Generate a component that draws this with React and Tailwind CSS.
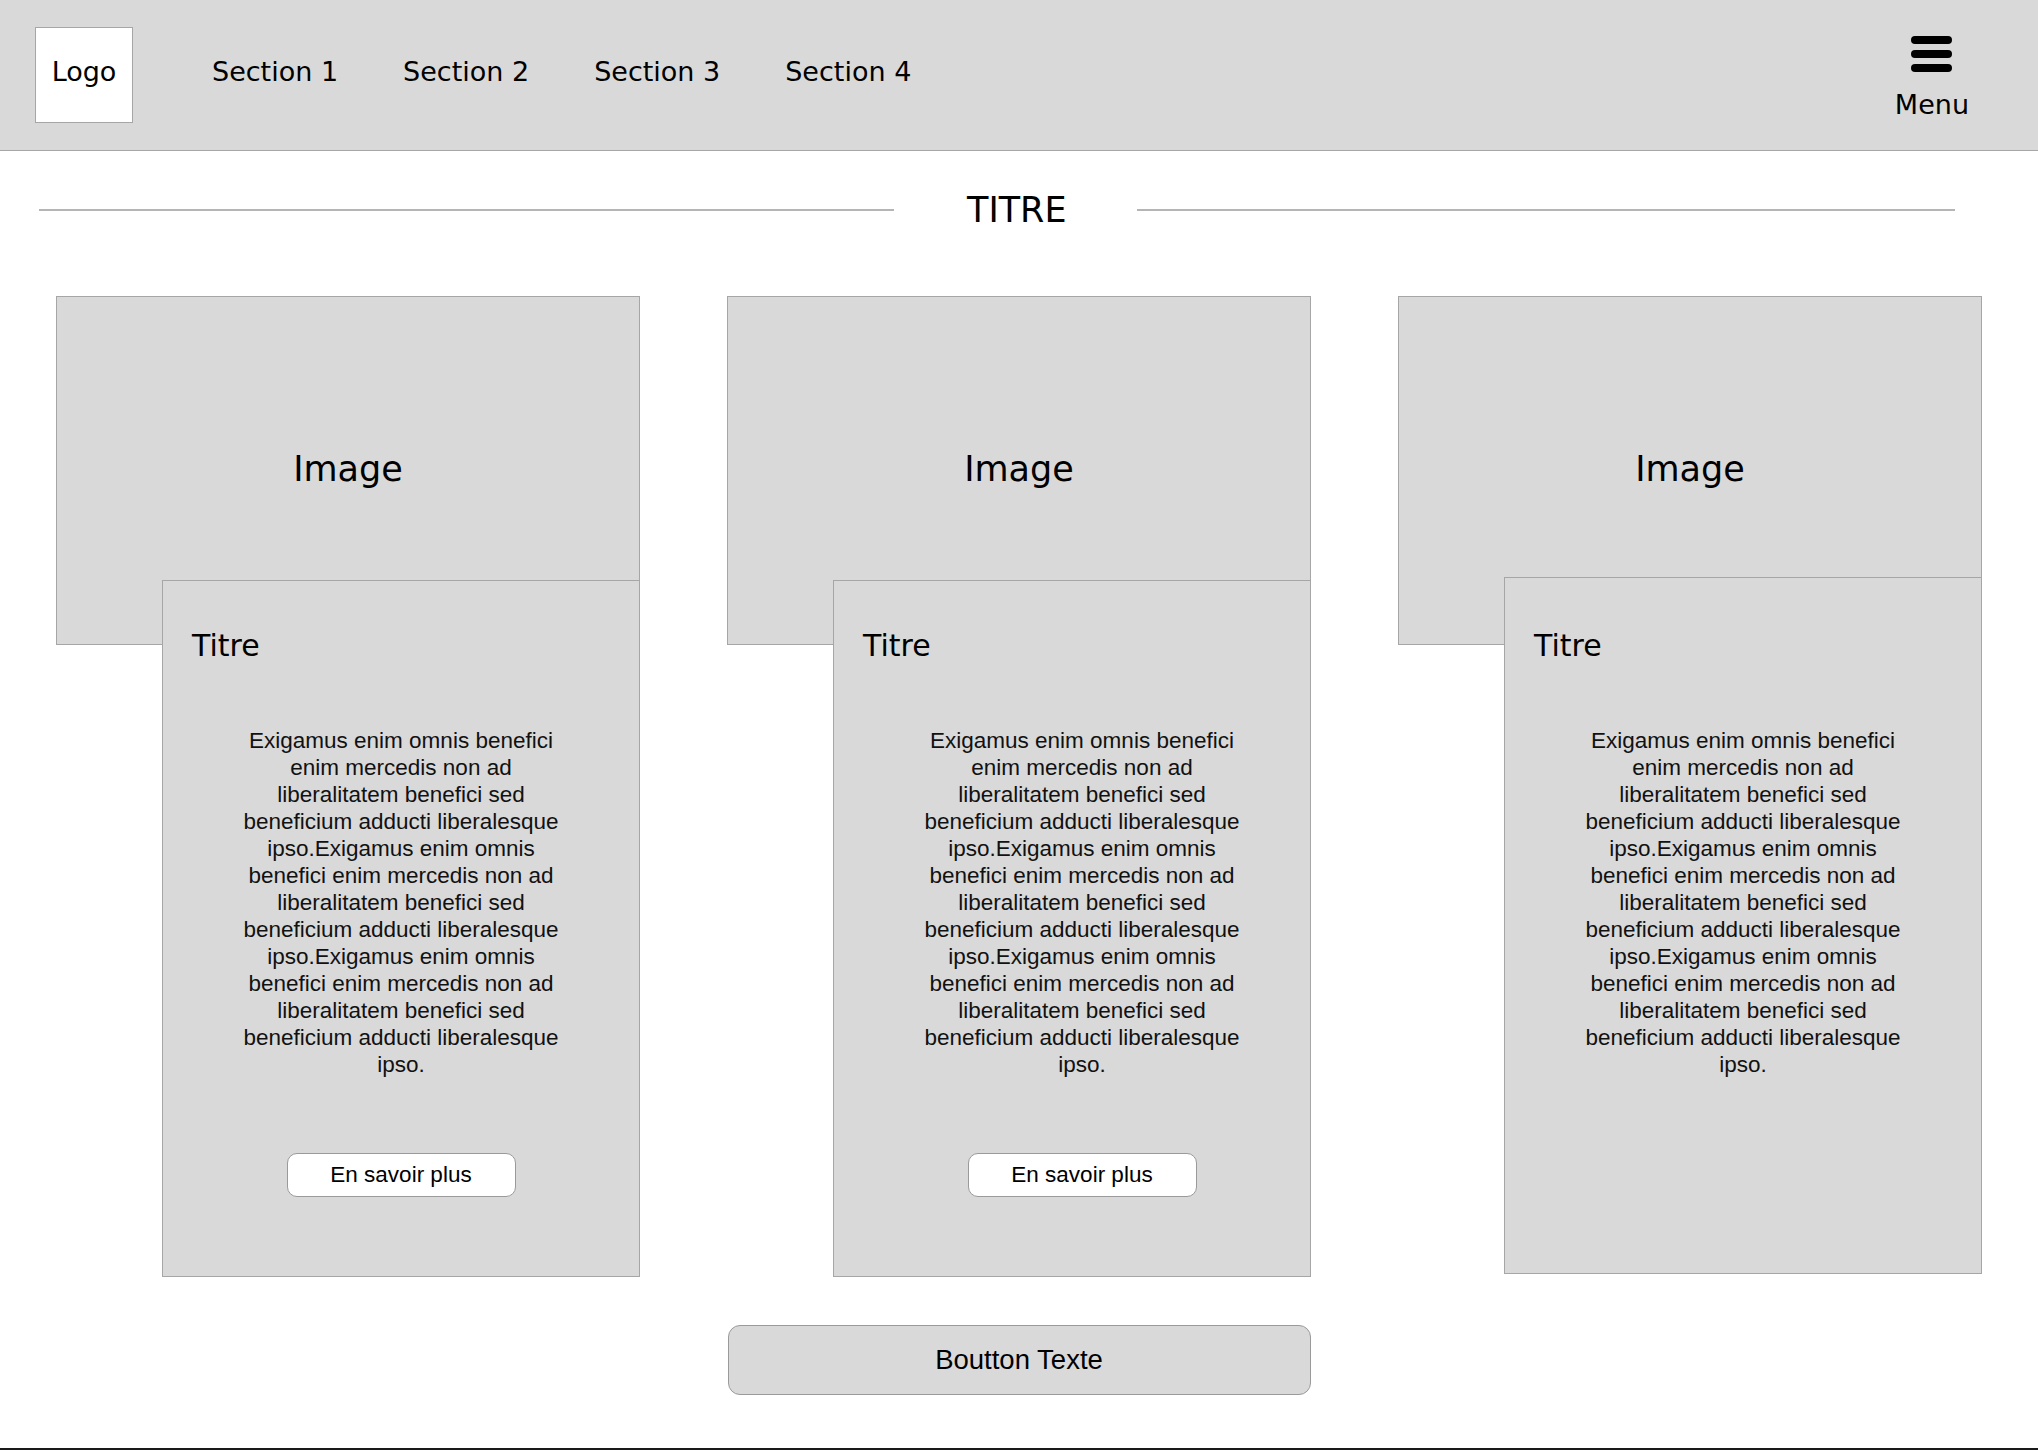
import React from "react";

const lorem =
  "Exigamus enim omnis benefici enim mercedis non ad liberalitatem benefici sed beneficium adducti liberalesque ipso.Exigamus enim omnis benefici enim mercedis non ad liberalitatem benefici sed beneficium adducti liberalesque ipso.Exigamus enim omnis benefici enim mercedis non ad liberalitatem benefici sed beneficium adducti liberalesque ipso.";

const ui = { fontFamily: '"DejaVu Sans", "Liberation Sans", sans-serif' };
const helv = { fontFamily: '"Liberation Sans", Arial, sans-serif' };

const Header = () => (
  <header
    className="h-[151px] bg-[#d9d9d9] border-b border-[#a6a6a6] flex items-center pl-[35px] pr-[69px] text-[27px] text-black"
    style={ui}
  >
    {/* Logo */}
    <div className="w-[98px] h-[96px] bg-white border border-[#a6a6a6] flex items-center justify-center pb-[5px]">
      Logo
    </div>

    {/* Nav */}
    <nav className="flex items-center gap-[65px] ml-[79px] pb-[6px]">
      {["Section 1", "Section 2", "Section 3", "Section 4"].map((s) => (
        <span key={s} className="whitespace-nowrap">
          {s}
        </span>
      ))}
    </nav>

    {/* Menu */}
    <div className="ml-auto flex flex-col items-center pt-[6px]">
      <div className="flex flex-col gap-[6px] w-[41px]">
        <span className="h-[8px] rounded-full bg-black"></span>
        <span className="h-[8px] rounded-full bg-black"></span>
        <span className="h-[8px] rounded-full bg-black"></span>
      </div>
      <span className="mt-[18px] leading-[30px]">Menu</span>
    </div>
  </header>
);

const Card = ({ withButton, shift, offset }) => (
  <div className="flex flex-col">
    {/* Image placeholder */}
    <div
      className="h-[349px] bg-[#d9d9d9] border border-[#a6a6a6] flex items-center justify-center text-[35px] text-black pb-[2px]"
      style={ui}
    >
      Image
    </div>

    {/* Text block overlapping the image */}
    <div
      className={`relative ml-[106px] h-[697px] bg-[#d9d9d9] border border-[#a6a6a6] flex flex-col ${
        shift ? "-mt-[68px]" : "-mt-[65px]"
      }`}
    >
      <h3
        className={`pl-[29px] text-[30px] leading-[36px] text-black ${shift ? "pt-[50px]" : "pt-[47px]"}`}
        style={ui}
      >
        Titre
      </h3>
      <div className={`flex flex-col items-center ${offset ? "pl-[20px]" : ""}`}>
        <p
          className="mt-[63px] w-[332px] text-center text-[22.5px] leading-[27px] text-[#111]"
          style={helv}
        >
          {lorem}
        </p>
        {withButton && (
          <button
            className="mt-[75px] w-[229px] h-[44px] bg-white border border-[#9a9a9a] rounded-[10px] text-[22.5px] text-black"
            style={helv}
          >
            En savoir plus
          </button>
        )}
      </div>
    </div>
  </div>
);

export default function App() {
  return (
    <div className="w-[2038px] min-h-[1450px] bg-white flex flex-col">
      <Header />

      {/* Section title */}
      <div className="flex items-center pl-[39px] pr-[83px] h-[118px]">
        <div className="w-[855px] h-[2px] bg-[#b5b5b5]"></div>
        <h1 className="ml-[73px] mr-[70px] text-[35px] leading-[40px] text-black" style={ui}>
          TITRE
        </h1>
        <div className="flex-1 h-[2px] bg-[#b5b5b5]"></div>
      </div>

      {/* Cards */}
      <div className="grid grid-cols-3 gap-[87px] px-[56px] mt-[27px]">
        <Card withButton />
        <Card withButton offset />
        <Card shift />
      </div>

      {/* Bottom button */}
      <div className="flex justify-center mt-[48px]">
        <button
          className="w-[583px] h-[70px] bg-[#d9d9d9] border border-[#9a9a9a] rounded-[12px] text-[27.5px] text-black"
          style={helv}
        >
          Boutton Texte
        </button>
      </div>

      <div className="mt-auto border-t-2 border-[#1a1a1a]"></div>
    </div>
  );
}
